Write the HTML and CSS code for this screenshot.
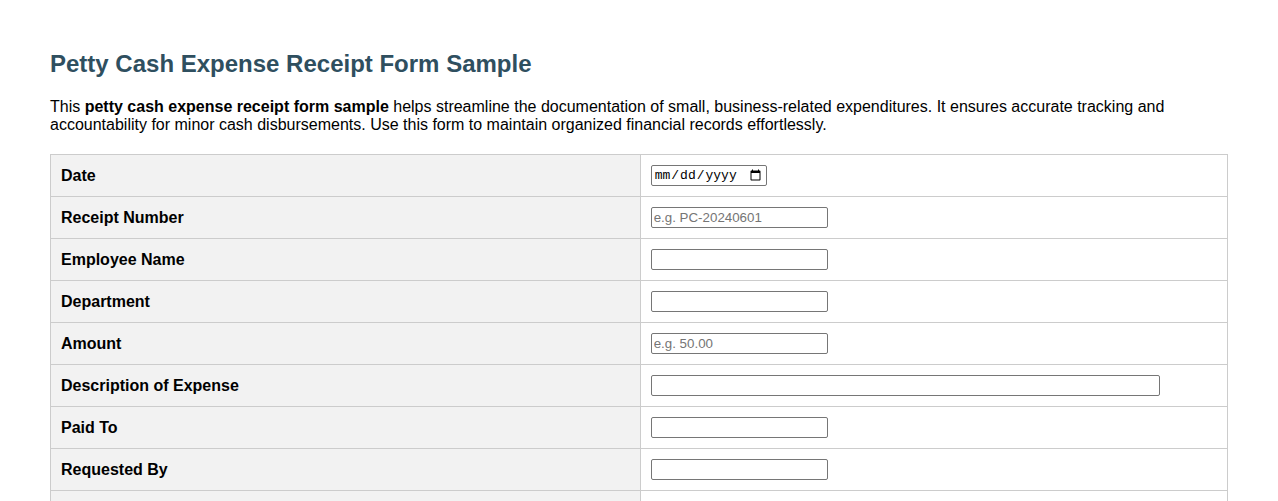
FILE: index.html
```html
<!DOCTYPE html>
<html lang="en">
<head>
<meta charset="utf-8">
<title>Petty Cash Expense Receipt Form Sample</title>
<link rel="stylesheet" href="styles.css">
</head>
<body>
<main class="page">
  <h2 class="title">Petty Cash Expense Receipt Form Sample</h2>
  <p class="intro">This <strong>petty cash expense receipt form sample</strong> helps streamline the documentation of small, business-related expenditures. It ensures accurate tracking and accountability for minor cash disbursements. Use this form to maintain organized financial records effortlessly.</p>
  <table class="form-table">
    <tr><th>Date</th><td><input class="field date" type="date"></td></tr>
    <tr><th>Receipt Number</th><td><input class="field" type="text" placeholder="e.g. PC-20240601"></td></tr>
    <tr><th>Employee Name</th><td><input class="field" type="text"></td></tr>
    <tr><th>Department</th><td><input class="field" type="text"></td></tr>
    <tr><th>Amount</th><td><input class="field" type="text" placeholder="e.g. 50.00"></td></tr>
    <tr><th>Description of Expense</th><td><input class="field wide" type="text"></td></tr>
    <tr><th>Paid To</th><td><input class="field" type="text"></td></tr>
    <tr><th>Requested By</th><td><input class="field" type="text"></td></tr>
    <tr><th>Approved By</th><td><input class="field" type="text"></td></tr>
    <tr><th>Signature</th><td><input class="field" type="text"></td></tr>
  </table>
</main>
</body>
</html>
```
FILE: styles.css
```css
html, body {
  margin: 0;
  padding: 0;
  background: #ffffff;
}
body {
  font-family: "Liberation Sans", Arial, sans-serif;
  color: #000000;
}
.page {
  padding: 30px 50px;
}
.title {
  font-size: 24px;
  font-weight: bold;
  color: #2f4f5f;
  margin: 20px 0 20px;
  line-height: normal;
}
.intro {
  font-size: 16px;
  line-height: normal;
  margin: 0 0 20px;
}
.form-table {
  width: 100%;
  border-collapse: collapse;
  font-size: 16px;
}
.form-table th,
.form-table td {
  border: 1px solid #cccccc;
  padding: 10px;
  text-align: left;
  vertical-align: middle;
}
.form-table th {
  width: 50.1%;
  background: #f2f2f2;
  font-weight: bold;
  color: #000000;
}
.field {
  box-sizing: border-box;
  width: 177px;
  height: 21px;
  margin: 0;
  padding: 1px 2px;
  border: 1px solid #767676;
  border-radius: 2px;
  font-family: "Liberation Sans", Arial, sans-serif;
  font-size: 13.333px;
  color: #000;
  background: #fff;
  display: block;
}
.field::placeholder {
  color: #757575;
}
.date {
  width: 116px;
  font-family: "Liberation Mono", "DejaVu Sans Mono", monospace;
  font-size: 13px;
}
.wide {
  width: 90%;
}
```
